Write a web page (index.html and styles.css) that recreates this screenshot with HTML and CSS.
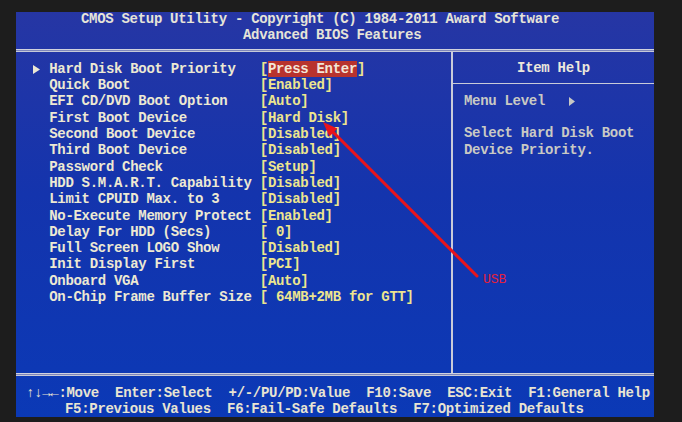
FILE: index.html
```html
<!DOCTYPE html>
<html lang="en">
<head>
    <meta charset="UTF-8">
    <title>Advanced BIOS Features</title>
    <link rel="stylesheet" href="styles.css">
</head>
<body>
    <div class="screen">
        <header class="title">
            <div class="title-line first">CMOS Setup Utility - Copyright (C) 1984-2011 Award Software</div>
            <div class="title-line second">Advanced BIOS Features</div>
        </header>
        <div class="rule"></div>

        <main class="panels">
            <section class="items">
                <div class="row">
                    <span class="mark"><svg width="8" height="9" viewBox="0 0 8 9"><polygon points="0,0 7,4.5 0,9" fill="#ece8d4"/></svg></span>
                    <span class="label">Hard Disk Boot Priority</span>
                    <span class="value">[<em class="sel">Press Enter</em>]</span>
                </div>
                <div class="row"><span class="mark"></span><span class="label">Quick Boot</span><span class="value">[Enabled]</span></div>
                <div class="row"><span class="mark"></span><span class="label">EFI CD/DVD Boot Option</span><span class="value">[Auto]</span></div>
                <div class="row"><span class="mark"></span><span class="label">First Boot Device</span><span class="value">[Hard Disk]</span></div>
                <div class="row"><span class="mark"></span><span class="label">Second Boot Device</span><span class="value">[Disabled]</span></div>
                <div class="row"><span class="mark"></span><span class="label">Third Boot Device</span><span class="value">[Disabled]</span></div>
                <div class="row"><span class="mark"></span><span class="label">Password Check</span><span class="value">[Setup]</span></div>
                <div class="row"><span class="mark"></span><span class="label">HDD S.M.A.R.T. Capability</span><span class="value">[Disabled]</span></div>
                <div class="row"><span class="mark"></span><span class="label">Limit CPUID Max. to 3</span><span class="value">[Disabled]</span></div>
                <div class="row"><span class="mark"></span><span class="label">No-Execute Memory Protect</span><span class="value">[Enabled]</span></div>
                <div class="row"><span class="mark"></span><span class="label">Delay For HDD (Secs)</span><span class="value">[ 0]</span></div>
                <div class="row"><span class="mark"></span><span class="label">Full Screen LOGO Show</span><span class="value">[Disabled]</span></div>
                <div class="row"><span class="mark"></span><span class="label">Init Display First</span><span class="value">[PCI]</span></div>
                <div class="row"><span class="mark"></span><span class="label">Onboard VGA</span><span class="value">[Auto]</span></div>
                <div class="row"><span class="mark"></span><span class="label">On-Chip Frame Buffer Size</span><span class="value">[ 64MB+2MB for GTT]</span></div>
            </section>

            <aside class="help">
                <div class="help-head">Item Help</div>
                <div class="help-body">
                    <div class="help-line">Menu Level   <svg width="7" height="9" viewBox="0 0 7 9"><polygon points="0,0 6,4.5 0,9" fill="#c8c8c4"/></svg></div>
                    <div class="help-line"> </div>
                    <div class="help-line">Select Hard Disk Boot</div>
                    <div class="help-line">Device Priority.</div>
                </div>
            </aside>
        </main>

        <div class="rule"></div>
        <footer class="keys">
            <div class="key-line first">↑↓→←:Move  Enter:Select  +/-/PU/PD:Value  F10:Save  ESC:Exit  F1:General Help</div>
            <div class="key-line second">F5:Previous Values  F6:Fail-Safe Defaults  F7:Optimized Defaults</div>
        </footer>
    </div>

    <!-- annotation drawn over the photo -->
    <svg class="pointer" width="682" height="422" viewBox="0 0 682 422">
        <line x1="329" y1="128" x2="477" y2="276" stroke="#e8141c" stroke-width="3" stroke-linecap="round"/>
        <polygon points="323,122 329.4,136.4 337.4,128.4" fill="#e8141c"/>
    </svg>
    <span class="usb">USB</span>
</body>
</html>
```

FILE: styles.css
```css
* {
    margin: 0;
    padding: 0;
    box-sizing: border-box;
}

body {
    background: #1d1d1d;
    width: 682px;
    height: 422px;
    overflow: hidden;
    position: relative;
    font-family: 'Liberation Mono', 'DejaVu Sans Mono', monospace;
    font-size: 14px;
    letter-spacing: -0.3px;
    font-weight: bold;
}

.title-line,
.label,
.value,
.help-line,
.key-line {
    white-space: pre;
}

.screen {
    margin: 12px 0 0 16px;
    width: 638px;
    height: 405px;
    display: flex;
    flex-direction: column;
    background: linear-gradient(180deg, #2636a4 0%, #1434ad 45%, #0b39b6 100%);
    color: #ece8d4;
}

.title {
    height: 37px;
    line-height: 15.5px;
    color: #e6e4d8;
}

.title-line.first { padding-left: 65px; }
.title-line.second { padding-left: 227px; }

.rule {
    height: 3px;
    flex-shrink: 0;
    background: #7f87bb;
    border-top: 1px solid #d0d2de;
    border-bottom: 1px solid #c6c9d8;
}

.panels {
    height: 322px;
    display: flex;
}

.items {
    width: 435px;
    padding: 9px 0 0 17px;
    line-height: 16.3px;
}

.row {
    display: flex;
}

.mark {
    width: 16.2px;
    display: flex;
    align-items: center;
}

.label {
    width: 210.6px;
    color: #ede9d3;
}

.value {
    color: #ede58e;
}

.sel {
    font-style: normal;
    background: #b8332e;
    color: #f3e7d8;
}

.help {
    flex: 1;
    border-left: 2px solid #c9cbd9;
    color: #c9c9c4;
}

.help-head {
    height: 32px;
    padding-top: 8px;
    line-height: 16.3px;
    text-align: center;
    color: #ece8dc;
    border-bottom: 1px solid #c9cbd9;
}

.help-body {
    padding: 9px 0 0 11px;
    line-height: 16.3px;
}

.help-line svg {
    vertical-align: -1px;
}

.keys {
    flex: 1;
    padding-top: 9px;
    line-height: 16px;
    color: #e8e4d2;
}

.key-line.first { padding-left: 10px; }
.key-line.second { padding-left: 49px; }

.pointer {
    position: absolute;
    left: 0;
    top: 0;
    pointer-events: none;
}

.usb {
    position: absolute;
    left: 483px;
    top: 272px;
    font-size: 13px;
    font-weight: normal;
    letter-spacing: 0;
    color: #e4203a;
}
```
